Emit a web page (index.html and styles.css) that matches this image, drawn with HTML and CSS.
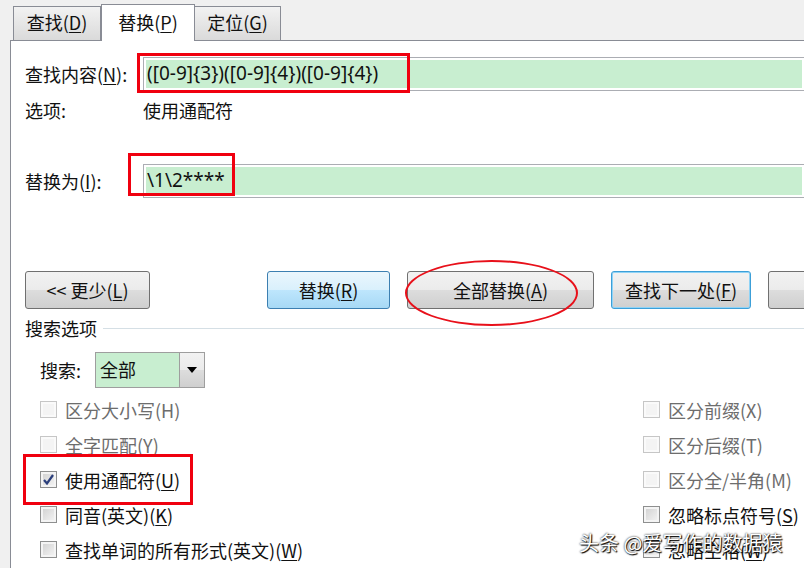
FILE: index.html
```html
<!DOCTYPE html>
<html lang="zh-CN">
<head>
    <meta charset="UTF-8">
    <title>查找和替换</title>
    <link rel="stylesheet" href="styles.css">
</head>
<body>
    <div class="dialog">
        <div class="tabs">
            <div class="tab">查找(<u>D</u>)</div>
            <div class="tab active">替换(<u>P</u>)</div>
            <div class="tab last">定位(<u>G</u>)</div>
        </div>

        <div class="panel">
            <div class="row field-row">
                <label class="label">查找内容(<u>N</u>):</label>
                <div class="field">([0-9]{3})([0-9]{4})([0-9]{4})</div>
                <span class="mark mark-find"></span>
            </div>

            <div class="row info-row">
                <span class="label">选项:</span>
                <span>使用通配符</span>
            </div>

            <div class="row field-row replace-row">
                <label class="label">替换为(<u>I</u>):</label>
                <div class="field">\1\2****</div>
                <span class="mark mark-replace"></span>
            </div>

            <div class="row buttons">
                <button class="btn btn-less">&lt;&lt; 更少(<u>L</u>)</button>
                <button class="btn btn-blue">替换(<u>R</u>)</button>
                <button class="btn btn-all">全部替换(<u>A</u>)</button>
                <button class="btn btn-focus">查找下一处(<u>F</u>)</button>
                <button class="btn btn-cut"></button>
                <span class="ellipse"></span>
            </div>

            <div class="group-title">
                <span>搜索选项</span>
                <span class="rule"></span>
            </div>

            <div class="search-row">
                <span class="search-label">搜索:</span>
                <div class="select">
                    <span class="select-value">全部</span>
                    <span class="select-arrow">
                        <svg width="10" height="6" viewBox="0 0 10 6"><path d="M0 0h10L5 6z" fill="#000"/></svg>
                    </span>
                </div>
            </div>

            <div class="options">
                <div class="check disabled"><span class="box"></span>区分大小写(H)</div>
                <div class="check disabled"><span class="box"></span>区分前缀(X)</div>
                <div class="check disabled"><span class="box"></span>全字匹配(Y)</div>
                <div class="check disabled"><span class="box"></span>区分后缀(T)</div>
                <div class="check wildcard">
                    <span class="box">
                        <svg width="13" height="13" viewBox="0 0 13 13"><path d="M2 7l3 3.5L11 2" fill="none" stroke="#2b3f7c" stroke-width="2.2"/></svg>
                    </span>使用通配符(<u>U</u>)
                    <span class="mark mark-check"></span>
                </div>
                <div class="check disabled"><span class="box"></span>区分全/半角(M)</div>
                <div class="check"><span class="box"></span>同音(英文)(<u>K</u>)</div>
                <div class="check"><span class="box"></span>忽略标点符号(<u>S</u>)</div>
                <div class="check"><span class="box"></span>查找单词的所有形式(英文)(<u>W</u>)</div>
                <div class="check"><span class="box"></span>忽略空格(<u>W</u>)</div>
            </div>
        </div>

        <div class="watermark">头条 @爱写作的数据猿</div>
    </div>
</body>
</html>
```

FILE: styles.css
```css
* {
    box-sizing: border-box;
}

body {
    margin: 0;
    background-color: #f0f0f0;
    font-family: "Noto Sans CJK SC", "Noto Sans", sans-serif;
    font-size: 18px;
    color: #111;
    overflow: hidden;
}

u {
    text-decoration-thickness: 1px;
    text-underline-offset: 2px;
}

.dialog {
    position: relative;
    width: 804px;
    height: 568px;
}

/* tabs */
.tabs {
    display: flex;
    align-items: flex-end;
    height: 40px;
    padding-left: 13px;
}

.tab {
    height: 34px;
    width: 88px;
    border: 1px solid #898c95;
    border-bottom: none;
    background: linear-gradient(#f2f2f2, #dadada);
    text-align: center;
    line-height: 31px;
}

.tab.active {
    position: relative;
    z-index: 1;
    width: 94px;
    height: 37px;
    margin-bottom: -1px;
    background: #fff;
    line-height: 34px;
}

.tab.last {
    width: 86px;
    border-left: none;
}

/* panel */
.panel {
    margin-left: 10px;
    height: 528px;
    border-top: 1px solid #898c95;
    border-left: 1px solid #898c95;
    background-color: #fff;
    padding: 16px 0 0 14px;
    overflow: hidden;
}

.row {
    position: relative;
    display: flex;
    align-items: center;
}

.label {
    width: 118px;
    flex-shrink: 0;
}

.field-row {
    height: 34px;
}

.field {
    flex: 1;
    height: 34px;
    border: 1px solid #abadb3;
    border-right: none;
    background-color: #c8eed0;
    box-shadow: inset 0 0 0 2px #fff;
    padding-left: 3px;
    line-height: 31px;
    font-family: "Noto Sans", "Noto Sans CJK SC", sans-serif;
    font-size: 19px;
    white-space: nowrap;
}

.info-row {
    margin-top: 9px;
    line-height: 20px;
}

.replace-row {
    margin-top: 44px;
}

/* annotations */
.mark {
    position: absolute;
    border: 3px solid #f0000f;
}

.mark-find {
    left: 112px;
    top: -4px;
    width: 273px;
    height: 40px;
}

.mark-replace {
    left: 103px;
    top: -11px;
    width: 107px;
    height: 43px;
}

.mark-check {
    left: -17px;
    top: -8px;
    width: 170px;
    height: 51px;
}

.ellipse {
    position: absolute;
    left: 380px;
    top: -11px;
    width: 173px;
    height: 66px;
    border: 2.5px solid #e8101a;
    border-radius: 50%;
}

/* buttons */
.buttons {
    margin-top: 73px;
    gap: 17px;
}

.btn {
    height: 38px;
    flex-shrink: 0;
    border: 1px solid #707070;
    border-radius: 3px;
    background: linear-gradient(#f2f2f2 0%, #ebebeb 50%, #dddddd 50%, #cfcfcf 100%);
    font-family: inherit;
    font-size: 18px;
    color: #111;
    padding: 0;
}

.btn-less {
    width: 125px;
    margin-right: 100px;
}

.btn-blue {
    width: 123px;
    border-color: #3c7fb1;
    background: linear-gradient(#eaf6fd 0%, #d9f0fc 50%, #bee6fd 50%, #a7d9f5 100%);
}

.btn-all {
    width: 187px;
}

.btn-focus {
    width: 140px;
    border-color: #3c9fd8;
    box-shadow: inset 0 0 0 1px #8fd3f6;
}

.btn-cut {
    width: 60px;
}

/* search options */
.group-title {
    display: flex;
    align-items: center;
    margin-top: 9px;
    line-height: 20px;
}

.rule {
    flex: 1;
    height: 1px;
    margin-left: 6px;
    background-color: #d5dfe5;
}

.search-row {
    display: flex;
    align-items: center;
    margin-top: 14px;
    padding-left: 15px;
}

.search-label {
    width: 55px;
}

.select {
    display: flex;
    width: 110px;
    height: 36px;
    border: 1px solid #9e9e9e;
}

.select-value {
    flex: 1;
    background-color: #c8eed0;
    padding-left: 4px;
    line-height: 33px;
}

.select-arrow {
    width: 25px;
    display: flex;
    align-items: center;
    justify-content: center;
    border-left: 1px solid #9e9e9e;
    background: linear-gradient(#f2f2f2 0%, #ebebeb 50%, #dddddd 50%, #cfcfcf 100%);
}

.options {
    display: grid;
    grid-template-columns: 603px 1fr;
    grid-auto-rows: 35px;
    margin-top: 4px;
    padding-left: 15px;
}

.check {
    position: relative;
    display: flex;
    align-items: center;
    white-space: nowrap;
}

.box {
    width: 17px;
    height: 17px;
    margin-right: 8px;
    border: 1px solid #8e8f8f;
    background: linear-gradient(135deg, #cfcfcf, #f6f6f6);
    box-shadow: inset 0 0 0 2px #f4f4f4;
    display: flex;
    align-items: center;
    justify-content: center;
}

.check.disabled {
    color: #6d6d6d;
}

.check.disabled .box {
    border-color: #c6c6c6;
    background: #f4f4f4;
    box-shadow: inset 0 0 0 2px #fafafa;
}

.watermark {
    position: absolute;
    left: 579px;
    top: 528px;
    font-size: 20px;
    color: #fff;
    text-shadow: 0 0 2px #000, 1px 1px 1px #000;
    white-space: nowrap;
}
```
